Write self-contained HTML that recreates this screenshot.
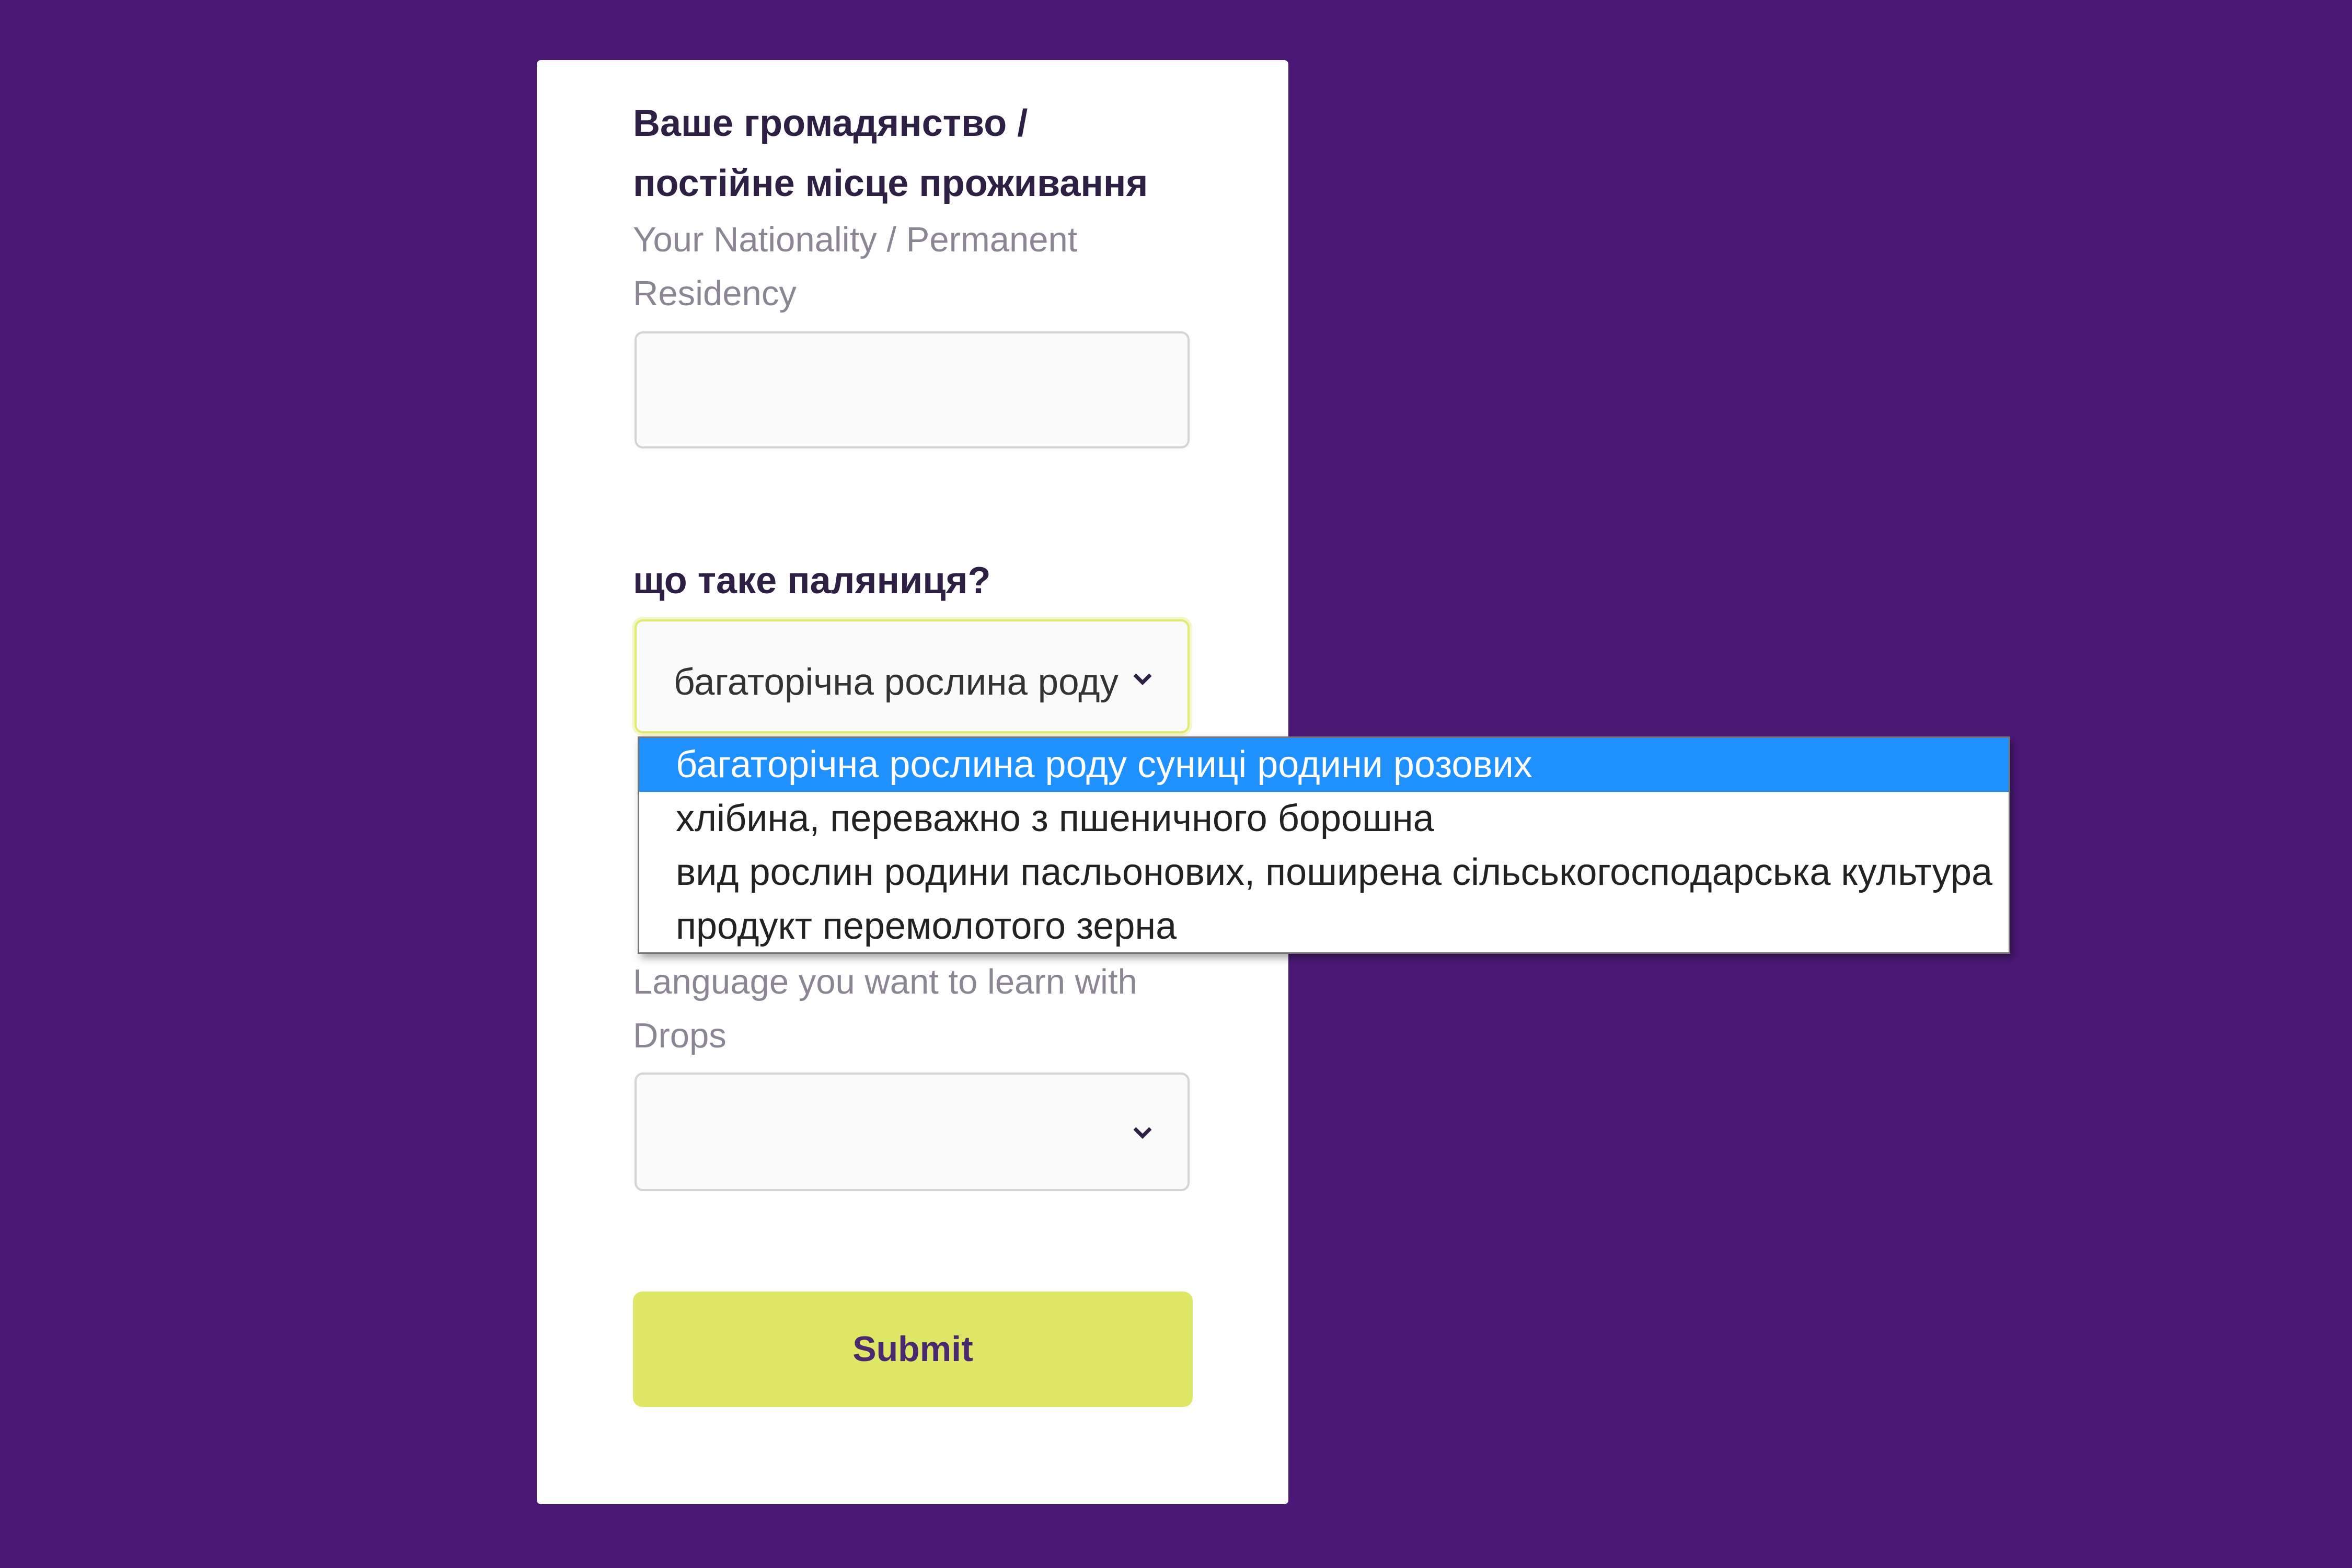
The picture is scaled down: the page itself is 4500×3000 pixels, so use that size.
<!DOCTYPE html>
<html><head><meta charset="utf-8"><style>
*{margin:0;padding:0;box-sizing:border-box}
body{width:4500px;height:3000px;background:#4b1876;position:relative;overflow:hidden;font-family:"Liberation Sans","DejaVu Sans",sans-serif}
.card{position:absolute;left:1027px;top:115px;width:1438px;height:2763px;background:#fff;border-radius:8px}
.a{position:absolute;white-space:nowrap}
.h{font-weight:bold;font-size:72px;color:#2e1f45;left:1211px}
.s{font-size:67px;color:#8b8594;left:1211px}
.box{position:absolute;left:1214px;width:1062px;background:#fafafa;border:4px solid #d4d4d4;border-radius:16px}
.chev{position:absolute}
.dd{position:absolute;left:1220px;top:1409px;width:2626px;height:416px;background:#fff;border:3px solid #767676;box-shadow:6px 8px 14px rgba(0,0,0,.35)}
.opt{height:103px;line-height:103px;font-size:72px;color:#222;padding-left:70px;white-space:nowrap}
.sel{background:#1e90ff;color:#fff}
</style></head><body>
<div class="card"></div>
<div class="a h" style="top:195px">Ваше громадянство /</div>
<div class="a h" style="top:310px">постійне місце проживання</div>
<div class="a s" style="top:420px">Your Nationality / Permanent</div>
<div class="a s" style="top:523px">Residency</div>
<div class="box" style="top:634px;height:224px"></div>
<div class="a h" style="top:1070px">що таке паляниця?</div>
<div class="box" style="top:1185px;height:218px;border-color:#e2ea70;box-shadow:0 0 0 5px rgba(223,231,102,.35);overflow:hidden">
<div class="a" style="left:71px;top:76px;font-size:71px;color:#333;width:855px;overflow:hidden">багаторічна рослина роду суниці</div>
</div>
<svg class="chev" style="left:2166px;top:1285px" width="40" height="28" viewBox="0 0 40 28"><path d="M5 6 L20 21 L35 6" fill="none" stroke="#2e1f45" stroke-width="7"/></svg>
<div class="a s" style="top:1840px">Language you want to learn with</div>
<div class="a s" style="top:1943px">Drops</div>
<div class="box" style="top:2052px;height:227px"></div>
<svg class="chev" style="left:2166px;top:2153px" width="40" height="28" viewBox="0 0 40 28"><path d="M5 6 L20 21 L35 6" fill="none" stroke="#2e1f45" stroke-width="7"/></svg>
<div class="a" style="left:1211px;top:2471px;width:1071px;height:221px;background:#dfe766;border-radius:18px;text-align:center;line-height:221px;font-weight:bold;font-size:68px;color:#4a2a6e">Submit</div>
<div class="dd">
<div class="opt sel">багаторічна рослина роду суниці родини розових</div>
<div class="opt">хлібина, переважно з пшеничного борошна</div>
<div class="opt">вид рослин родини пасльонових, поширена сільськогосподарська культура</div>
<div class="opt">продукт перемолотого зерна</div>
</div>
</body></html>
